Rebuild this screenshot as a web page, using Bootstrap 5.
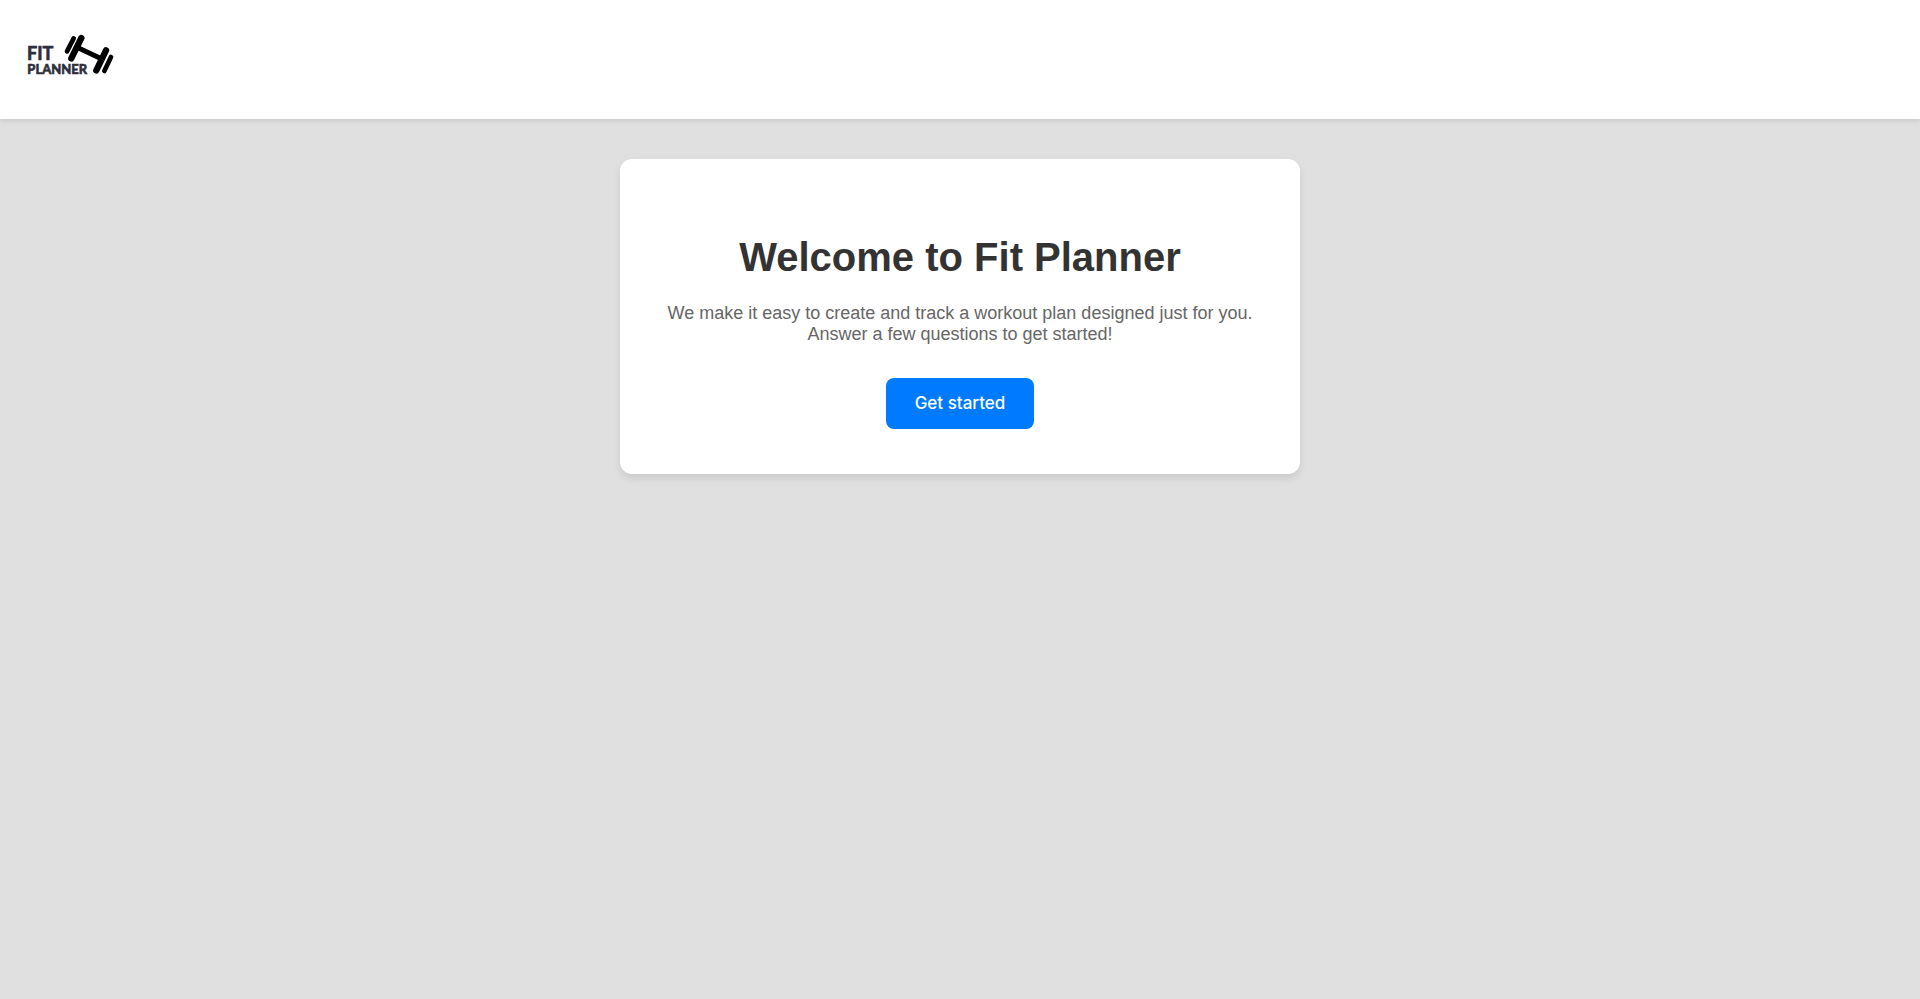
<!DOCTYPE html>
<html lang="en">
<head>
<meta charset="utf-8">
<meta name="viewport" content="width=device-width, initial-scale=1">
<title>Fit Planner</title>
<link href="https://cdn.jsdelivr.net/npm/bootstrap@5.3.0/dist/css/bootstrap.min.css" rel="stylesheet">
<style>
body { background: #e0e0e0; font-family: "Liberation Sans", Arial, sans-serif; }
.site-header { padding: 25px 20px 39px; box-shadow: 0 2px 4px rgba(0,0,0,.1); }
.site-header svg { font-family: Lato, sans-serif; font-weight: 700; }
.welcome { max-width: 680px; margin-top: 40px; padding: 72px 40px 45px; border-radius: 12px; box-shadow: 0 4px 8px rgba(0,0,0,.1); }
.welcome h1 { font-size: 40px; line-height: 52px; font-weight: 700; color: #333; margin-bottom: 20px; }
.welcome p { font-size: 18px; line-height: 21px; color: #666; margin-bottom: 33px; }
.btn-start { --bs-btn-bg: #007bff; --bs-btn-color: #fff; --bs-btn-hover-bg: #0069d9; --bs-btn-hover-color: #fff; --bs-btn-active-bg: #0062cc; --bs-btn-active-color: #fff; font-family: Inter, sans-serif; font-weight: 500; font-size: 17px; line-height: 21px; padding: 15px 29px; border: 0; border-radius: 8px; }
</style>
</head>
<body class="min-vh-100">
<header class="site-header navbar bg-white">
  <a class="d-block" href="#" aria-label="Fit Planner home">
    <svg class="d-block" width="100" height="55" viewBox="0 0 300 165">
      <g fill="#2e2e3c" stroke="#2e2e3c" stroke-width="2">
        <text x="21" y="105" font-size="54">FIT</text>
        <text x="22" y="147" font-size="39">PLANNER</text>
      </g>
      <g stroke="#000" stroke-linecap="round" fill="none">
        <path stroke-width="14" d="M141 79L161 40M253 138L273 96"/>
        <path stroke-width="19" d="M154 100L184 39M229 136L258 76"/>
        <path stroke-width="15" d="M174 68L244 101"/>
      </g>
    </svg>
  </a>
</header>
<main class="container-fluid">
  <section class="welcome bg-white mx-auto text-center">
    <h1>Welcome to Fit Planner</h1>
    <p>We make it easy to create and track a workout plan designed just for you. Answer a few questions to get started!</p>
    <button type="button" class="btn btn-start">Get started</button>
  </section>
</main>
<script src="https://cdn.jsdelivr.net/npm/bootstrap@5.3.0/dist/js/bootstrap.bundle.min.js"></script>
</body>
</html>
